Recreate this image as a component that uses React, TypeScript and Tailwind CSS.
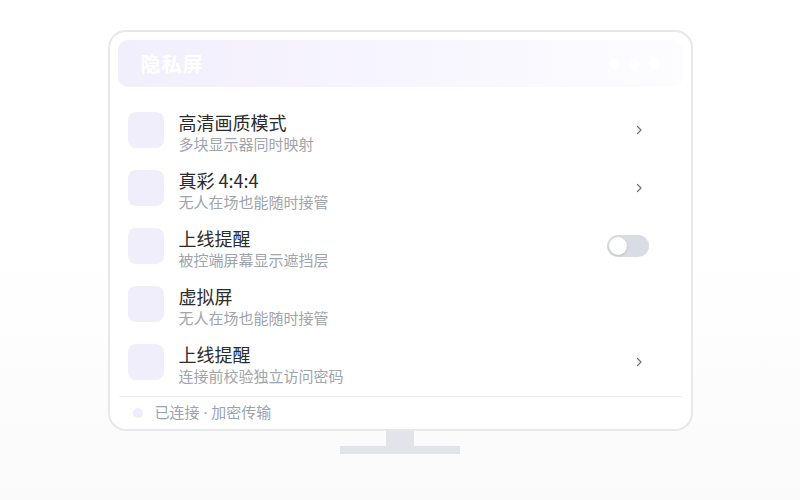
import React from "react";

const rows = [
  { title: "高清画质模式", desc: "多块显示器同时映射", action: "chevron" },
  { title: "真彩 4:4:4", desc: "无人在场也能随时接管", action: "chevron" },
  { title: "上线提醒", desc: "被控端屏幕显示遮挡层", action: "toggle" },
  { title: "虚拟屏", desc: "无人在场也能随时接管", action: "none" },
  { title: "上线提醒", desc: "连接前校验独立访问密码", action: "chevron" },
];

function Chevron() {
  return (
    <svg width="8" height="12" viewBox="0 0 8 12" fill="none">
      <path d="M2.5 2.5l3.5 3.5-3.5 3.5" stroke="#6b7280" strokeWidth="1.2" strokeLinecap="round" strokeLinejoin="round" />
    </svg>
  );
}

export default function App() {
  return (
    <div
      className="w-[800px] h-[500px] bg-gradient-to-b from-white from-50% to-[#fafafb] pt-[30px]"
      style={{ fontFamily: '"Noto Sans CJK SC", "Noto Sans", sans-serif' }}
    >
      {/* Monitor */}
      <div className="mx-auto w-[585px] h-[401px] border-2 border-[#e6e8ec] rounded-[18px] bg-white px-[8px] pt-[8px] flex flex-col">
        {/* Header */}
        <div className="h-[47px] rounded-[10px] bg-gradient-to-r from-[#f2effd] via-[#f7f5fe] to-[#fdfdff] flex items-center justify-between pl-[23px] pr-[24px]">
          <span className="text-white text-[20px] font-bold tracking-[1px]">隐私屏</span>
          <div className="flex gap-[10px]">
            <span className="w-[10px] h-[10px] rounded-full bg-white" />
            <span className="w-[10px] h-[10px] rounded-full bg-white" />
            <span className="w-[10px] h-[10px] rounded-full bg-white" />
          </div>
        </div>

        {/* Settings list */}
        <div className="flex flex-col mt-[14px] pl-[10px] pr-[34px]">
          {rows.map((r, i) => (
            <div key={i} className="h-[58px] flex items-center">
              <div className="w-[36px] h-[36px] rounded-[8px] bg-[#f1eefc] shrink-0" />
              <div className="ml-[15px] flex flex-col mt-[4px]">
                <span className="text-[18px] leading-[24px] font-normal text-[#2b2b2b]">{r.title}</span>
                <span className="text-[15px] leading-[20px] text-[#a0a4ab]">{r.desc}</span>
              </div>
              <div className="ml-auto w-[42px] flex justify-end">
                {r.action === "chevron" && (
                  <div className="mr-[6px]">
                    <Chevron />
                  </div>
                )}
                {r.action === "toggle" && (
                  <div className="w-[42px] h-[22px] rounded-full bg-[#d9dce2] p-[2px]">
                    <div className="w-[18px] h-[18px] rounded-full bg-white shadow-sm" />
                  </div>
                )}
              </div>
            </div>
          ))}
        </div>

        {/* Footer */}
        <div className="mt-[5px] mx-[1px] border-t border-[#eceef1] h-[32px] flex items-center px-[14px]">
          <span className="w-[10px] h-[10px] rounded-full bg-[#f0ecfd]" />
          <span className="ml-[12px] text-[15px] text-[#9ca3af]">
            已连接<span className="font-['Noto_Sans']"> · </span>加密传输
          </span>
        </div>
      </div>

      {/* Stand */}
      <div className="flex flex-col items-center">
        <div className="w-[28px] h-[15px] bg-[#e1e4e9]" />
        <div className="w-[120px] h-[8px] bg-[#e1e4e9]" />
      </div>
    </div>
  );
}
